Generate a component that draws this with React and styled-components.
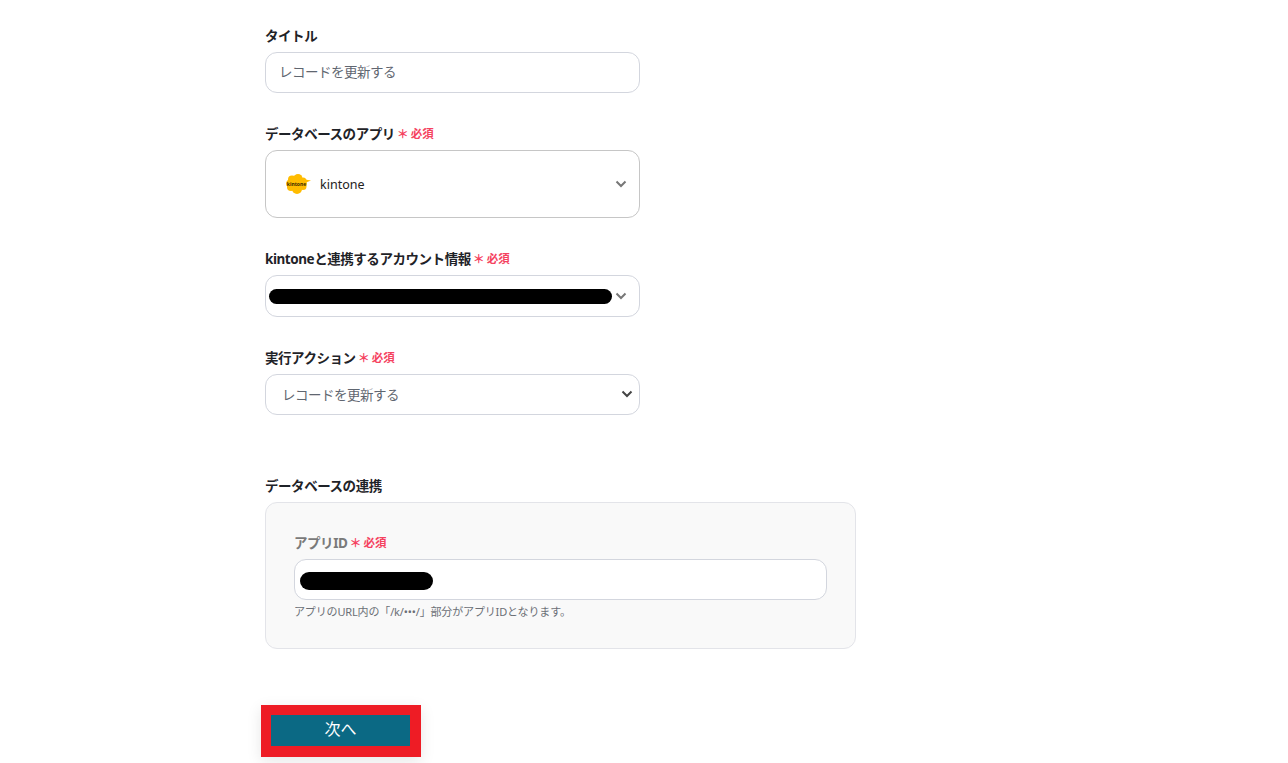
import styled, { createGlobalStyle } from 'styled-components'

const GlobalStyle = createGlobalStyle`
  html, body {
    margin: 0;
    padding: 0;
    background: #fff;
    height: 763px;
    overflow: hidden;
  }
  body {
    font-family: "Noto Sans", "Noto Sans CJK JP", sans-serif;
    color: #1f2328;
  }
`

const Page = styled.div`
  display: flex;
  flex-direction: column;
  align-items: flex-start;
  padding: 25px 0 0 265px;
`

const Field = styled.section`
  display: flex;
  flex-direction: column;
  width: ${(p) => p.$width || 375}px;
  margin-bottom: ${(p) => p.$gap || 0}px;
`

const Label = styled.div`
  display: flex;
  align-items: center;
  box-sizing: border-box;
  height: 20px;
  padding-bottom: 1px;
  margin-bottom: 7px;
  font-size: 13.5px;
  font-weight: 700;
  letter-spacing: -0.45px;
  color: ${(p) => p.$muted ? '#7a7a7a' : '#1f2328'};
`

const Required = styled.span`
  display: inline-flex;
  align-items: center;
  margin-left: 2px;
  font-size: 11.5px;
  font-weight: 700;
  letter-spacing: 0;
  color: #f5425f;
`

const Star = styled.span`
  font-size: 12px;
  font-weight: 700;
  margin-right: 2px;
  line-height: 1;
  position: relative;
  top: 2px;
`

const Box = styled.div`
  box-sizing: border-box;
  display: flex;
  align-items: center;
  justify-content: space-between;
  height: ${(p) => p.$height || 41}px;
  padding: ${(p) => p.$padding || '0 14px 3px 13px'};
  background: #fff;
  border: 1px solid ${(p) => p.$border || '#d3d6de'};
  border-radius: ${(p) => p.$radius || 12}px;
  font-size: 13.5px;
  letter-spacing: -0.5px;
  color: #5f6670;
`

const AppName = styled.div`
  display: flex;
  align-items: center;
  gap: 8px;
  font-size: 12.5px;
  letter-spacing: 0;
  color: #222;
`

const Redacted = styled.div`
  width: ${(p) => p.$width}px;
  height: ${(p) => p.$height}px;
  background: #000;
  border-radius: 9px;
`

const Panel = styled.div`
  box-sizing: border-box;
  width: 591px;
  height: 147px;
  padding: 29px 28px 0;
  background: #f9f9f9;
  border: 1px solid #e3e4e9;
  border-radius: 12px;
`

const Hint = styled.div`
  margin-top: 3px;
  font-size: 11px;
  letter-spacing: -0.15px;
  color: #6b6f76;
`

const NextButton = styled.button`
  box-sizing: content-box;
  display: block;
  width: 139px;
  height: 26px;
  margin: 56px 0 0 -4px;
  padding: 0 0 5px;
  background: #0b6984;
  border-style: solid;
  border-color: #ee1c25;
  border-width: 10px 11px 11px 10px;
  box-shadow: 0 4px 14px rgba(0, 0, 0, 0.1);
  font-family: inherit;
  font-size: 16px;
  color: #fff;
`

function Chevron({ dark }) {
  return (
    <svg width="12" height="8" viewBox="0 0 12 8" fill="none">
      <path d="M1.5 1.5 6 6l4.5-4.5" stroke={dark ? '#444' : '#777'} strokeWidth="2" />
    </svg>
  )
}

function KintoneLogo() {
  return (
    <svg width="27" height="20" viewBox="0 0 27 20">
      <g fill="#ffbc00">
        <ellipse cx="11.500" cy="9.500" rx="10.500" ry="6.500" />
        <circle cx="7" cy="5.500" r="4" />
        <circle cx="13" cy="4.500" r="4.500" />
        <circle cx="18" cy="7" r="3.500" />
        <circle cx="6" cy="13" r="4" />
        <circle cx="12" cy="15" r="5" />
        <circle cx="18" cy="12.500" r="3.500" />
        <path d="M20 5.500 26 6.500l-5 2z" />
      </g>
      <text x="11.500" y="11.500" textAnchor="middle" fontSize="5" fontWeight="700" letterSpacing="0" fill="#3a2a00">kintone</text>
    </svg>
  )
}

function Req() {
  return (
    <Required><Star>＊</Star>必須</Required>
  )
}

export default function App() {
  return (
    <>
      <GlobalStyle />
      <Page>
        <Field $gap={30}>
          <Label>タイトル</Label>
          <Box>レコードを更新する</Box>
        </Field>
        <Field $gap={30}>
          <Label>データベースのアプリ<Req /></Label>
          <Box $height={68} $border="#c6c6c6" $padding="0 12px 0 19px">
            <AppName><KintoneLogo />kintone</AppName>
            <Chevron />
          </Box>
        </Field>
        <Field $gap={30}>
          <Label>kintoneと連携するアカウント情報<Req /></Label>
          <Box $height={42} $padding="0 12px 0 3px">
            <Redacted $width={343} $height={15} />
            <Chevron />
          </Box>
        </Field>
        <Field $gap={60}>
          <Label>実行アクション<Req /></Label>
          <Box $padding="0 6px 2px 16px">
            レコードを更新する
            <Chevron dark />
          </Box>
        </Field>
        <Field $width={591}>
          <Label>データベースの連携</Label>
          <Panel>
            <Label $muted>アプリID<Req /></Label>
            <Box $padding="3px 5px 0">
              <Redacted $width={133} $height={18} />
            </Box>
            <Hint>アプリのURL内の「/k/•••/」部分がアプリIDとなります。</Hint>
          </Panel>
        </Field>
        <NextButton>次へ</NextButton>
      </Page>
    </>
  )
}
